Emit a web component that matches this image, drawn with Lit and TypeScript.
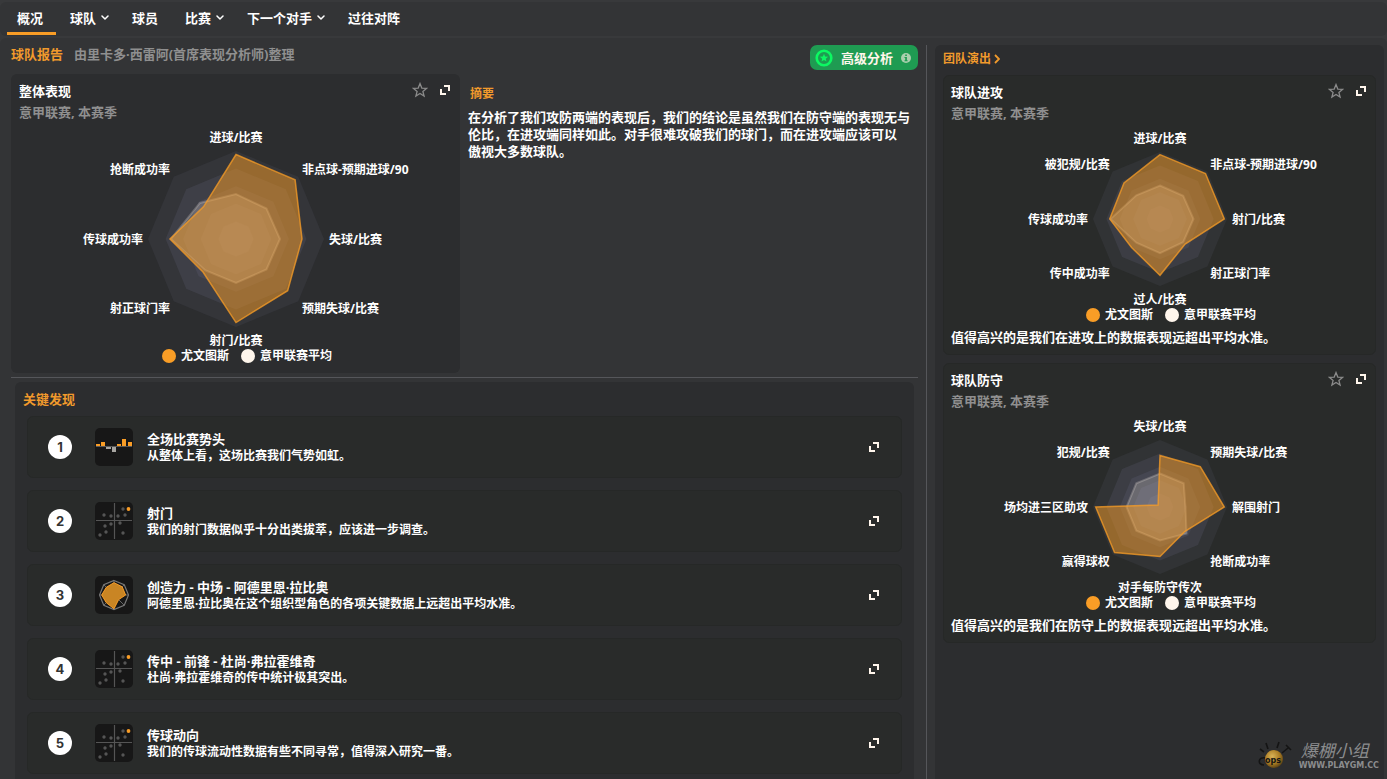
import { LitElement, html, svg, css } from "lit";
import { customElement, property } from "lit/decorators.js";
import { classMap } from "lit/directives/class-map.js";

const chevron = html`<svg class="chev" width="8" height="6" viewBox="0 0 8 6"><path d="M1 1l3 3 3-3" fill="none" stroke="currentColor" stroke-width="1.5" stroke-linecap="round" stroke-linejoin="round"/></svg>`;
const expandIcon = html`<svg width="10" height="10" viewBox="0 0 10 10"><path d="M4 0h6v6H8V2H4zM0 4h2v4h4v2H0z" fill="#fff6ec"/></svg>`;
const starIcon = html`<svg width="16" height="16" viewBox="0 0 16 16"><path d="M8 1.600l1.800 4.500 4.700.300-3.600 3 1.200 4.700L8 11.500l-4.100 2.600 1.200-4.700-3.600-3 4.700-.300z" fill="none" stroke="#8b8b8b" stroke-width="1.300" stroke-linejoin="miter"/></svg>`;

interface Chart {
  labels: string[];
  team: number[];
  league: number[];
}

const overall: Chart = {
  labels: ["进球/比赛", "非点球-预期进球/90", "失球/比赛", "预期失球/比赛", "射门/比赛", "射正球门率", "传球成功率", "抢断成功率"],
  team: [0.96, 0.95, 0.75, 0.83, 0.95, 0.53, 0.75, 0.52],
  league: [0.51, 0.49, 0.5, 0.49, 0.5, 0.5, 0.74, 0.58],
};
const attack: Chart = {
  labels: ["进球/比赛", "非点球-预期进球/90", "射门/比赛", "射正球门率", "过人/比赛", "传中成功率", "传球成功率", "被犯规/比赛"],
  team: [0.96, 0.96, 0.96, 0.53, 0.84, 0.6, 0.75, 0.76],
  league: [0.5, 0.49, 0.5, 0.49, 0.51, 0.5, 0.74, 0.5],
};
const defence: Chart = {
  labels: ["失球/比赛", "预期失球/比赛", "解围射门", "抢断成功率", "对手每防守传次", "赢得球权", "场均进三区助攻", "犯规/比赛"],
  team: [0.77, 0.85, 0.96, 0.52, 0.74, 0.96, 0.96, 0.04],
  league: [0.5, 0.5, 0.38, 0.56, 0.5, 0.5, 0.5, 0.5],
};

const shape = (r: number, values: number[]) =>
  values
    .map((v, i) => {
      const a = (i * Math.PI) / 4;
      return `${(r * v * Math.sin(a)).toFixed(2)},${(-r * v * Math.cos(a)).toFixed(2)}`;
    })
    .join(" ");

@customElement("radar-chart")
export class RadarChart extends LitElement {
  @property({ attribute: false }) chart: Chart = overall;
  @property({ type: Number }) radius = 88;

  static styles = css`
    :host { display: flex; flex-direction: column; align-items: center; padding-top: 6px; }
    svg { display: block; max-width: 100%; overflow: visible; }
    text { fill: #fff; font-size: 12px; font-weight: 700; }
    .ring { fill: #787896; fill-opacity: 0.16; }
    .ring.outer { fill-opacity: 0.11; }
    .league { fill: #fff6ec; fill-opacity: 0.2; stroke: #fff6ec; stroke-opacity: 0.22; stroke-width: 2; }
    .team { fill: #f99d26; fill-opacity: 0.5; stroke: #f99d26; stroke-opacity: 0.75; stroke-width: 1.5; }
    .legend { display: flex; gap: 12px; padding-left: 23px; font-size: 12px; line-height: 16px; color: #fff; font-weight: 700; }
    .key { display: flex; align-items: center; gap: 5px; }
    .dot { width: 14px; height: 14px; border-radius: 50%; background: #f99d26; }
    .dot.avg { background: #fff6ec; }
  `;

  render() {
    const r = this.radius;
    const half = r + 21;
    const d = r * 0.75;
    const dy = (r + 9) * 0.707;
    const spots: [number, number, string][] = [
      [0, -r - 13, "middle"], [d, -dy, "start"], [r + 5, 1, "start"], [d, dy + 1, "start"],
      [0, r + 14, "middle"], [-d, dy + 1, "end"], [-r - 5, 1, "end"], [-d, -dy, "end"],
    ];
    return html`
      <svg width="360" height=${half * 2} viewBox="-180 ${-half} 360 ${half * 2}">
        ${[1, 0.8, 0.6, 0.4, 0.2].map(
          (k) => svg`<polygon class=${k === 1 ? "ring outer" : "ring"} points=${shape(r, Array(8).fill(k))} />`
        )}
        <polygon class="league" points=${shape(r, this.chart.league)} />
        <polygon class="team" points=${shape(r, this.chart.team)} />
        ${this.chart.labels.map((label, i) => svg`<text x=${spots[i][0]} y=${spots[i][1] + 4} text-anchor=${spots[i][2]}>${label}</text>`)}
      </svg>
      <div class="legend">
        <span class="key"><i class="dot"></i>尤文图斯</span>
        <span class="key"><i class="dot avg"></i>意甲联赛平均</span>
      </div>
    `;
  }
}

@customElement("stat-card")
export class StatCard extends LitElement {
  @property() heading = "";
  @property() note = "";
  @property({ type: Number }) radius = 67;
  @property({ attribute: false }) chart: Chart = overall;

  static styles = css`
    :host { display: block; box-sizing: border-box; padding: 7px 7px 8px; border: 1px solid transparent; border-radius: 6px; }
    header { display: flex; align-items: flex-start; }
    hgroup { flex: 1; }
    h3, p { margin: 0; font-size: 13px; font-weight: 700; }
    h3 { line-height: 18px; color: #fff; }
    .scope { line-height: 24px; color: #8f8f8f; }
    .tools { display: flex; align-items: center; gap: 12px; padding-right: 2px; }
    button { display: block; margin: 0; padding: 0; border: 0; background: none; line-height: 0; cursor: pointer; }
    svg { display: block; }
    .note { margin-top: 5px; line-height: 18px; color: #fff; }
  `;

  render() {
    return html`
      <header>
        <hgroup>
          <h3>${this.heading}</h3>
          <p class="scope">意甲联赛, 本赛季</p>
        </hgroup>
        <div class="tools">
          <button aria-label="收藏">${starIcon}</button>
          <button aria-label="展开">${expandIcon}</button>
        </div>
      </header>
      <radar-chart .chart=${this.chart} .radius=${this.radius}></radar-chart>
      ${this.note ? html`<p class="note">${this.note}</p>` : ""}
    `;
  }
}

const momentum = svg`
  <path d="M1 18.500h36" stroke="#5b5a58" stroke-width="1"/>
  <path d="M1 16h4v2H1zM6 14h4v4H6zM22 16h4v2h-4zM27 11h4v7h-4zM33 14h4v4h-4z" fill="#f99d26"/>
  <path d="M11 19h5v2h-5zM17 19h4v5h-4z" fill="#a8a6a2"/>`;
const dots = [[9, 13], [28, 7], [30, 13], [16, 14], [23, 14], [10, 24], [16, 22], [25, 21], [11, 30], [5, 33], [28, 31]];
const scatter = svg`
  <path d="M19.500 1v36M1 18.500h36" stroke="#555" stroke-width="1.200"/>
  ${dots.map(([x, y]) => svg`<circle cx=${x} cy=${y} r="1.700" fill="#555"/>`)}
  <circle cx="33.500" cy="7" r="1.900" fill="#f99d26"/>`;
const miniRadar = svg`
  <g transform="translate(19 19)">
    <path d="M0-14v28M-14 0h28M-10-10l20 20M10-10l-20 20" stroke="#666" stroke-width="1"/>
    <polygon points=${shape(14.5, Array(8).fill(1))} fill="none" stroke="#777" stroke-width="1.200"/>
    <polygon points=${shape(14.5, [0.85, 0.8, 0.8, 0.45, 0.95, 0.75, 0.85, 0.75])} fill="#c98524" stroke="#f99d26" stroke-width="1"/>
  </g>`;

const findings = [
  { art: momentum, title: "全场比赛势头", text: "从整体上看，这场比赛我们气势如虹。" },
  { art: scatter, title: "射门", text: "我们的射门数据似乎十分出类拔萃，应该进一步调查。" },
  { art: miniRadar, title: "创造力 - 中场 - 阿德里恩·拉比奥", text: "阿德里恩·拉比奥在这个组织型角色的各项关键数据上远超出平均水准。" },
  { art: scatter, title: "传中 - 前锋 - 杜尚·弗拉霍维奇", text: "杜尚·弗拉霍维奇的传中统计极其突出。" },
  { art: scatter, title: "传球动向", text: "我们的传球流动性数据有些不同寻常，值得深入研究一番。" },
];

const tabs = [
  { label: "概况", menu: false }, { label: "球队", menu: true }, { label: "球员", menu: false },
  { label: "比赛", menu: true }, { label: "下一个对手", menu: true }, { label: "过往对阵", menu: false },
];

@customElement("app-root")
export class AppRoot extends LitElement {
  static styles = css`
    :host {
      display: flex; flex-direction: column; box-sizing: border-box; min-height: 100vh; position: relative;
      padding-top: 2px; gap: 2px; background: #38393b; color: #fff;
      font: 700 13px/18px "Noto Sans", "Noto Sans CJK SC", sans-serif;
    }
    * { box-sizing: border-box; }
    h1, h2, h3, p, ol { margin: 0; padding: 0; font-size: 13px; font-weight: 700; }
    button { margin: 0; padding: 0; border: 0; background: none; color: inherit; font: inherit; cursor: pointer; }
    svg { display: block; }
    nav { display: flex; height: 34px; padding-left: 7px; gap: 4px; background: #333436; border-radius: 6px; }
    .tab { display: flex; align-items: center; gap: 5px; height: 33px; padding: 2px 13px 0 10px; color: #fff; text-decoration: none; border-bottom: 3px solid transparent; }
    .tab.menu { padding-right: 9px; }
    .tab.active { border-color: #f99d26; }
    .main { flex: 1; display: grid; grid-template-columns: 927fr 460fr; background: #333436; border-radius: 6px 6px 0 0; padding-top: 7px; }
    .left { display: flex; flex-direction: column; padding: 0 8px 0 11px; border-right: 1px solid #55565a; }
    .title { display: flex; align-items: flex-start; gap: 11px; height: 25px; }
    .title h1, h2 { color: #f19a2c; }
    .title p { flex: 1; color: #8f8f8f; line-height: 18px; }
    .badge { display: flex; align-items: center; gap: 8px; height: 25px; padding: 0 7px 0 5px; border-radius: 7px; background: #1f9b52; color: #fff6ec; }
    .overview { display: grid; grid-template-columns: 449fr 458fr; padding: 4px 0; border-bottom: 1px solid #55565a; }
    .overview stat-card { background: #2c2d2f; }
    .summary { padding: 11px 0 0 8px; }
    .summary h2 { font-size: 12px; padding-left: 2px; }
    .summary p { margin-top: 6px; line-height: 17px; }
    .findings { flex: 1; margin: 4px 4px 0; padding: 8px 12px 0; background: #2c2d2f; border-radius: 6px 6px 0 0; }
    .findings h2 { margin-left: -4px; }
    ol { display: flex; flex-direction: column; gap: 12px; margin-top: 8px; list-style: none; }
    .row { display: flex; align-items: center; height: 62px; padding: 0 22px 0 20px; background: #292b2a; border: 1px solid #262827; border-radius: 6px; }
    .num { display: grid; place-items: center; width: 24px; height: 24px; border-radius: 50%; background: #fff; color: #333; font: 700 13px/18px Inter, sans-serif; }
    .thumb { margin: 0 14px 0 23px; width: 38px; height: 38px; border-radius: 5px; background: #171717; }
    .text { flex: 1; }
    .text h3 { line-height: 18px; }
    .text p { font-size: 12px; line-height: 16px; }
    .right { display: flex; flex-direction: column; gap: 8px; margin: 0 3px 0 8px; padding: 5px 8px 8px; background: #2c2d2f; border-radius: 6px 6px 0 0; }
    .right h2 { font-size: 12px; line-height: 17px; }
    .right h2 a { display: flex; align-items: center; gap: 3px; color: inherit; text-decoration: none; }
    .right stat-card { background: #292b2a; border-color: #262827; }
    .mark { position: absolute; right: 8px; bottom: 8px; display: flex; align-items: center; gap: 6px; color: #8b8c8e; }
    .brand { padding-left: 2px; font-size: 17px; line-height: 21px; font-weight: 400; font-style: italic; }
    .url { font: 700 8px/10px "DejaVu Sans", sans-serif; }
  `;

  render() {
    return html`
      <nav>
        ${tabs.map((t, i) => html`<a href="#" class=${classMap({ tab: true, menu: t.menu, active: i === 0 })}>${t.label}${t.menu ? chevron : ""}</a>`)}
      </nav>
      <div class="main">
        <section class="left">
          <div class="title">
            <h1>球队报告</h1>
            <p>由里卡多·西雷阿(首席表现分析师)整理</p>
            <button class="badge">
              <svg width="18" height="18" viewBox="0 0 18 18"><circle cx="9" cy="9" r="7.300" fill="none" stroke="#0cf862" stroke-width="2.600"/><path d="M9 4.800l1.100 2.800 3 .200-2.300 1.900.700 2.900L9 11l-2.500 1.600.700-2.900-2.300-1.900 3-.200z" fill="#0cf862"/></svg>
              <span>高级分析</span>
              <svg width="10" height="10" viewBox="0 0 10 10"><circle cx="5" cy="5" r="5" fill="#a9cfae"/><path d="M4.200 1.500h1.700v1.500H4.200zM3.500 4h2.400v3.200h.700v1H3.500v-1h.700V5h-.700z" fill="#1f9b52"/></svg>
            </button>
          </div>
          <div class="overview">
            <stat-card heading="整体表现" .radius=${88} .chart=${overall}></stat-card>
            <div class="summary">
              <h2>摘要</h2>
              <p>在分析了我们攻防两端的表现后，我们的结论是虽然我们在防守端的表现无与伦比，在进攻端同样如此。对手很难攻破我们的球门，而在进攻端应该可以<br>傲视大多数球队。</p>
            </div>
          </div>
          <section class="findings">
            <h2>关键发现</h2>
            <ol>
              ${findings.map((f, i) => html`
                <li class="row">
                  <span class="num">${i + 1}</span>
                  <svg class="thumb" viewBox="0 0 38 38">${f.art}</svg>
                  <div class="text"><h3>${f.title}</h3><p>${f.text}</p></div>
                  <button aria-label="展开">${expandIcon}</button>
                </li>`)}
            </ol>
          </section>
        </section>
        <aside class="right">
          <h2><a href="#">团队演出<svg width="6" height="10" viewBox="0 0 6 10"><path d="M1 1l4 4-4 4" fill="none" stroke="#f19a2c" stroke-width="1.800"/></svg></a></h2>
          <stat-card heading="球队进攻" note="值得高兴的是我们在进攻上的数据表现远超出平均水准。" .chart=${attack}></stat-card>
          <stat-card heading="球队防守" note="值得高兴的是我们在防守上的数据表现远超出平均水准。" .chart=${defence}></stat-card>
        </aside>
      </div>
      <div class="mark">
        <svg width="36" height="30" viewBox="0 0 36 30">
          <defs><radialGradient id="ball" cx=".4" cy=".35" r=".7"><stop offset="0" stop-color="#d9b257"/><stop offset=".6" stop-color="#a87a22"/><stop offset="1" stop-color="#503a14"/></radialGradient></defs>
          <path d="M3 8l4 3M9 2l2 6M22 1l-2 6M25 12l6-5M29 4l5 5M9 17c-8-2-9 7-2 7" fill="none" stroke="#141414" stroke-width="1.600"/>
          <circle cx="17" cy="18" r="9" fill="url(#ball)"/>
          <text x="16" y="22" text-anchor="middle" font-family="DejaVu Sans" font-size="8" font-weight="700" fill="#141414">ops</text>
        </svg>
        <div><div class="brand">爆棚小组</div><div class="url">WWW.PLAYGM.CC</div></div>
      </div>
    `;
  }
}
